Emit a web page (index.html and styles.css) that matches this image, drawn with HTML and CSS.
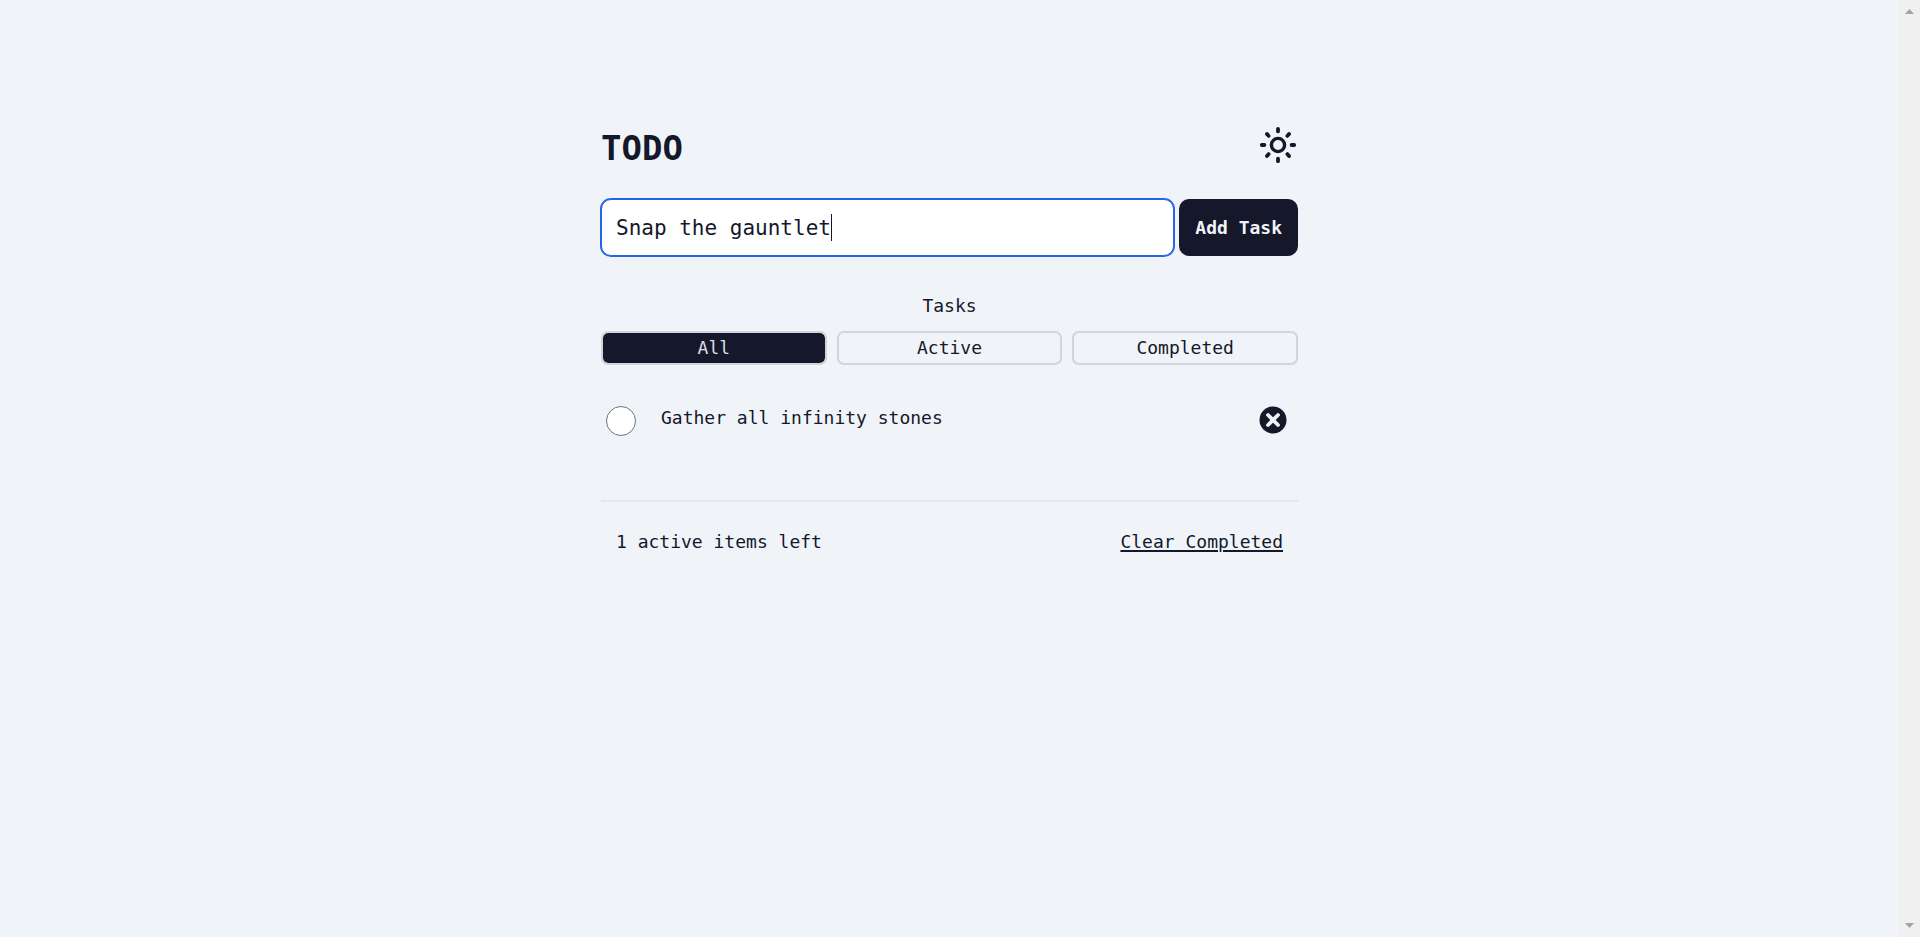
FILE: index.html
```html
<!DOCTYPE html>
<html lang="en">
<head>
<meta charset="utf-8">
<meta name="viewport" content="width=device-width, initial-scale=1">
<title>TODO</title>
<link rel="stylesheet" href="styles.css">
</head>
<body>
<div class="page">
  <main class="todo">
    <header class="header">
      <h1 class="title">TODO</h1>
      <button class="theme-toggle" type="button" aria-label="Toggle theme">
        <svg class="sun" viewBox="0 0 40 38" fill="none" stroke="currentColor" stroke-width="3.8" stroke-linecap="round">
          <circle cx="20" cy="19" r="6.6" stroke-width="3.4"/>
          <path d="M20 2.8v2.6M20 32.6v2.6M3.8 19h2.6M33.6 19h2.6M9 8l1.6 1.9M31 8l-1.6 1.9M9 30l1.6-1.9M31 30l-1.6-1.9"/>
        </svg>
      </button>
    </header>
    <form class="entry">
      <div class="entry-field">
        <input class="entry-input" type="text" aria-label="New task" value="Snap the gauntlet">
        <span class="caret" aria-hidden="true"></span>
      </div>
      <button class="entry-button" type="button">Add Task</button>
    </form>
    <section class="tasks">
      <h2 class="tasks-title">Tasks</h2>
      <div class="filters">
        <button class="filter filter-on" type="button">All</button>
        <button class="filter" type="button">Active</button>
        <button class="filter" type="button">Completed</button>
      </div>
      <ul class="list">
        <li class="item">
          <input class="check" type="checkbox" id="task-1">
          <label class="item-text" for="task-1">Gather all infinity stones</label>
          <button class="remove" type="button" aria-label="Delete task">
            <svg class="remove-icon" viewBox="0 0 28 28">
              <circle cx="14" cy="14" r="13.5" fill="currentColor"/>
              <path d="M9 9l10 10M19 9L9 19" stroke="#f0f4f9" stroke-width="3.8" stroke-linecap="round"/>
            </svg>
          </button>
        </li>
      </ul>
    </section>
    <footer class="footer">
      <span>1 active items left</span>
      <button class="clear" type="button">Clear Completed</button>
    </footer>
  </main>
  <div class="scrollbar" aria-hidden="true">
    <svg class="arrow" viewBox="0 0 9 5"><path d="M0 5L4.5 0L9 5z" fill="#a3a3a3"/></svg>
    <svg class="arrow" viewBox="0 0 9 5"><path d="M0 0L4.5 5L9 0z" fill="#a3a3a3"/></svg>
  </div>
</div>
</body>
</html>
```
FILE: styles.css
```css
* {
  box-sizing: border-box;
}

body {
  margin: 0;
  background: #f0f4f9;
  color: #15172a;
  font: 18px/24px Consolas, "DejaVu Sans Mono", monospace;
}

button,
input {
  font: inherit;
  color: inherit;
}

button {
  padding: 0;
  border: 0;
  background: none;
  cursor: pointer;
}

svg {
  display: block;
}

.page {
  display: flex;
  min-height: 100vh;
}

.todo {
  width: 100%;
  max-width: 697px;
  margin: 0 auto;
  padding-top: 126px;
}

.header {
  display: flex;
  justify-content: space-between;
  align-items: flex-start;
  height: 73px;
}

.title {
  margin: 0;
  font-size: 34px;
  line-height: 44px;
}

.sun {
  width: 40px;
  height: 38px;
}

.entry {
  display: flex;
  gap: 5px;
}

.entry-field {
  position: relative;
  flex: 1;
  min-width: 0;
  font-size: 21px;
}

.entry-input {
  display: block;
  width: 100%;
  height: 57px;
  padding: 0 14px;
  border: 1px solid #2563eb;
  border-radius: 10px;
  outline: 0;
  box-shadow: 0 0 0 1px #2563eb;
  background: #ffffff;
}

.caret {
  position: absolute;
  top: 15px;
  left: calc(15px + 17ch);
  width: 1px;
  height: 27px;
  background: #15172a;
}

.entry-button {
  padding: 0 16px;
  border-radius: 10px;
  background: #15172a;
  color: #f0f4f9;
  font-weight: bold;
}

.tasks-title {
  margin: 38px 0 13px;
  font-size: 18px;
  font-weight: normal;
  text-align: center;
}

.filters {
  display: grid;
  grid-template-columns: repeat(3, 1fr);
  gap: 10px;
}

.filter {
  height: 34px;
  border: 2px solid #d1d5db;
  border-radius: 7px;
}

.filter-on {
  background: #15172a;
  background-clip: padding-box;
  color: #d9dee6;
}

.list {
  margin: 0;
  padding: 41px 11px 64px 5px;
  border-bottom: 2px solid #e5e7eb;
  list-style: none;
}

.item {
  display: flex;
  align-items: flex-start;
}

.check {
  width: 30px;
  height: 30px;
  margin: 0 25px 0 0;
  border: 1px solid #6b7280;
  border-radius: 50%;
  background: #ffffff;
  appearance: none;
}

.item-text {
  flex: 1;
}

.remove-icon {
  width: 28px;
  height: 28px;
}

.footer {
  display: flex;
  justify-content: space-between;
  padding: 28px 15px;
}

.clear {
  text-decoration: underline;
  text-decoration-thickness: 2px;
  text-underline-offset: 2px;
}

.scrollbar {
  display: flex;
  flex-direction: column;
  justify-content: space-between;
  align-items: center;
  width: 21px;
  padding: 9px 0;
  background: #f0f0f0;
}

.arrow {
  width: 9px;
  height: 5px;
}
```
